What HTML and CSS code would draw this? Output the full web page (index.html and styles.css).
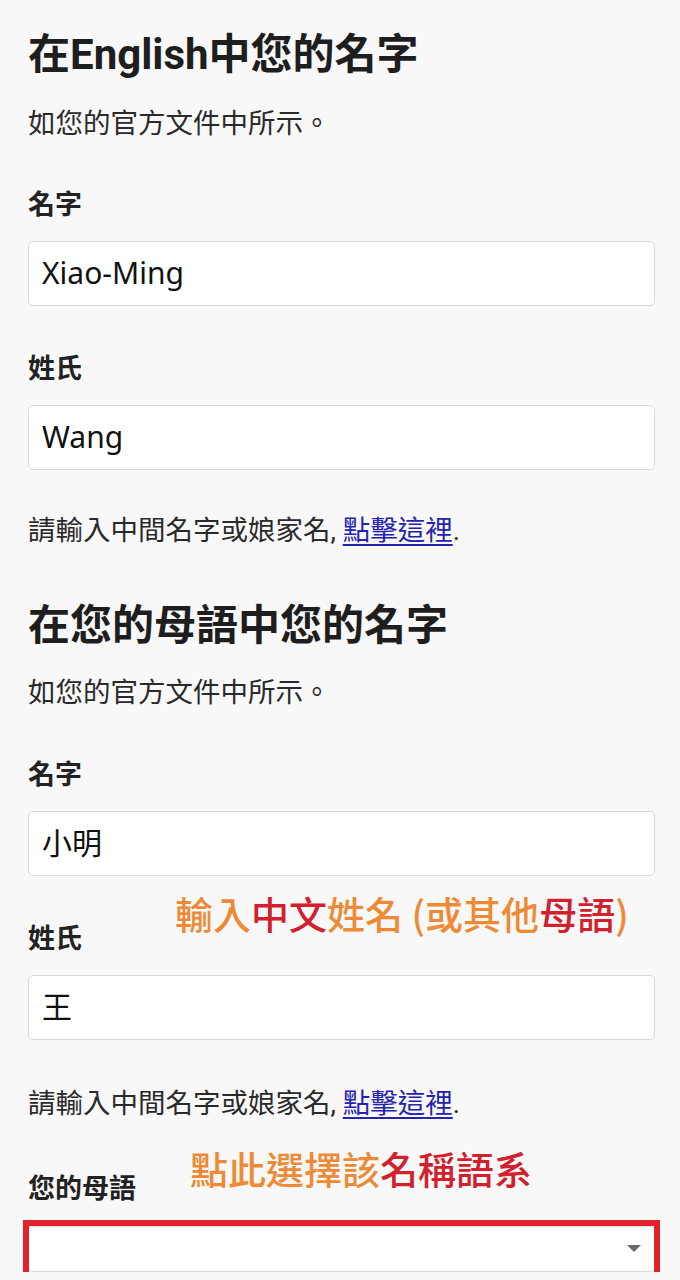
FILE: index.html
```html
<!DOCTYPE html>
<html lang="zh-Hant">
<head>
<meta charset="utf-8">
<title>您的名字</title>
<link rel="stylesheet" href="styles.css">
</head>
<body>
<main class="page">
  <section class="block">
    <h1 class="title">在English中您的名字</h1>
    <p class="sub sub-first">如您的官方文件中所示。</p>
    <div class="field field-first">
      <label class="label">名字</label>
      <div class="input latin">Xiao-Ming</div>
    </div>
    <div class="field">
      <label class="label">姓氏</label>
      <div class="input latin">Wang</div>
    </div>
    <p class="help">請輸入中間名字或娘家名, <a href="#" class="link">點擊這裡</a>.</p>
  </section>

  <section class="block">
    <h2 class="title title-second">在您的母語中您的名字</h2>
    <p class="sub sub-second">如您的官方文件中所示。</p>
    <div class="field field-first2">
      <label class="label">名字</label>
      <div class="input">小明</div>
    </div>
    <div class="field field-ann">
      <span class="note note-one"><span class="o">輸入</span><span class="r">中文</span><span class="o">姓名 (或其他</span><span class="r">母語</span><span class="o">)</span></span>
      <label class="label">姓氏</label>
      <div class="input">王</div>
    </div>
    <p class="help help-second">請輸入中間名字或娘家名, <a href="#" class="link">點擊這裡</a>.</p>
    <div class="field field-ann field-lang">
      <span class="note note-two"><span class="o">點此選擇該</span><span class="r">名稱語系</span></span>
      <label class="label">您的母語</label>
      <div class="select-wrap">
        <div class="select"><span class="caret"></span></div>
        <span class="highlight"></span>
      </div>
    </div>
  </section>
</main>
</body>
</html>
```
FILE: styles.css
```css
html, body {
  margin: 0;
  padding: 0;
  background: #f8f8f8;
}
body {
  font-family: Roboto, "Noto Sans CJK TC", "Noto Sans CJK SC", sans-serif;
  color: #222;
  overflow: hidden;
}
.page {
  padding: 0 25px 0 28px;
}
.title {
  margin: 28px 0 0;
  font-size: 42px;
  line-height: 54px;
  font-weight: 700;
  color: #1e1e1e;
  letter-spacing: 0;
}
.title-second {
  margin-top: 48px;
}
.sub {
  margin: 22px 0 0;
  font-size: 27.5px;
  line-height: 40px;
  color: #2a2a2a;
}
.sub-second {
  margin-top: 20px;
}
.field {
  position: relative;
  margin-top: 43px;
}
.field-first {
  margin-top: 41px;
}
.field-first2 {
  margin-top: 42px;
}
.label {
  display: block;
  font-size: 27px;
  line-height: 40px;
  font-weight: 700;
  color: #222;
  margin-bottom: 16px;
}
.input {
  box-sizing: border-box;
  height: 65px;
  background: #fff;
  border: 1.5px solid #d9d9d9;
  border-radius: 5px;
  padding: 0 13px;
  font-family: "Noto Sans", "Noto Sans CJK TC", sans-serif;
  font-size: 30px;
  line-height: 62px;
  color: #111;
}
.help {
  margin: 41px 0 0;
  font-size: 27.5px;
  line-height: 40px;
  color: #2a2a2a;
}
.help-second {
  margin-top: 44px;
}
.link {
  color: #2323b0;
  text-decoration: underline;
  text-underline-offset: 4px;
  text-decoration-thickness: 2px;
}
.field-lang {
  margin-top: 45px;
}
.note {
  position: absolute;
  font-size: 38px;
  line-height: 1;
  font-weight: 500;
  white-space: nowrap;
  font-family: "Noto Sans CJK TC", sans-serif;
}
.note-one {
  left: 147px;
  top: -25px;
}
.note-two {
  left: 162px;
  top: -20px;
}
.o { color: #ee8a35; }
.r { color: #d2202e; }
.select-wrap {
  position: relative;
  margin-top: 17px;
}
.select {
  position: relative;
  box-sizing: border-box;
  height: 46px;
  background: #fff;
  border: 1px solid #d9d9d9;
  border-radius: 4px;
}
.caret {
  position: absolute;
  right: 13px;
  top: 18px;
  width: 0;
  height: 0;
  border-left: 7px solid transparent;
  border-right: 7px solid transparent;
  border-top: 7px solid #6a6a6a;
}
.highlight {
  position: absolute;
  left: -5px;
  right: -5px;
  top: -6px;
  bottom: -6px;
  border: 6px solid #e1222b;
  box-sizing: border-box;
}
```
